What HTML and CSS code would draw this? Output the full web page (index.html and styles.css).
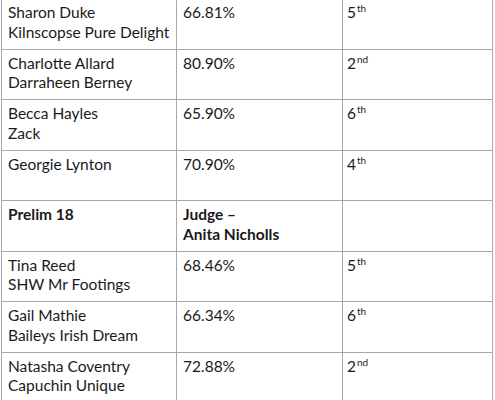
FILE: index.html
```html
<!DOCTYPE html>
<html>
<head>
<meta charset="utf-8">
<link rel="stylesheet" href="styles.css">
</head>
<body>
<table class="results">
  <colgroup>
    <col class="c-name">
    <col class="c-score">
    <col class="c-place">
  </colgroup>
  <tbody>
    <tr><td>Sharon Duke<br>Kilnscopse Pure Delight</td><td>66.81%</td><td>5<sup>th</sup></td></tr>
    <tr><td>Charlotte Allard<br>Darraheen Berney</td><td>80.90%</td><td>2<sup>nd</sup></td></tr>
    <tr><td>Becca Hayles<br>Zack</td><td>65.90%</td><td>6<sup>th</sup></td></tr>
    <tr><td>Georgie Lynton</td><td>70.90%</td><td>4<sup>th</sup></td></tr>
    <tr class="head"><td>Prelim 18</td><td>Judge –<br>Anita Nicholls</td><td></td></tr>
    <tr><td>Tina Reed<br>SHW Mr Footings</td><td>68.46%</td><td>5<sup>th</sup></td></tr>
    <tr><td>Gail Mathie<br>Baileys Irish Dream</td><td>66.34%</td><td>6<sup>th</sup></td></tr>
    <tr><td>Natasha Coventry<br>Capuchin Unique</td><td>72.88%</td><td>2<sup>nd</sup></td></tr>
  </tbody>
</table>
</body>
</html>
```

FILE: styles.css
```css
html, body {
  margin: 0;
  padding: 0;
  background: #ffffff;
}
body {
  overflow: hidden;
  font-family: Lato, "Liberation Sans", sans-serif;
  color: #1a1a1a;
}
.results {
  margin: -2px 0 0 1px;
  border-collapse: collapse;
  table-layout: fixed;
  width: 491px;
  font-size: 15.5px;
  line-height: 19.5px;
}
.c-name { width: 175px; }
.c-score { width: 166px; }
.c-place { width: 150px; }
.results td {
  border: 1px solid #a8a8a8;
  vertical-align: top;
  padding: 4px 5px 0 6px;
  height: 46px;
  box-sizing: border-box;
}
.results tr { height: 50.5px; }
.results td:nth-child(3) { padding-left: 4px; }
.head td { font-weight: bold; }
sup {
  font-size: 10px;
  line-height: 0;
  vertical-align: 6px;
  margin-left: 1px;
}
```
